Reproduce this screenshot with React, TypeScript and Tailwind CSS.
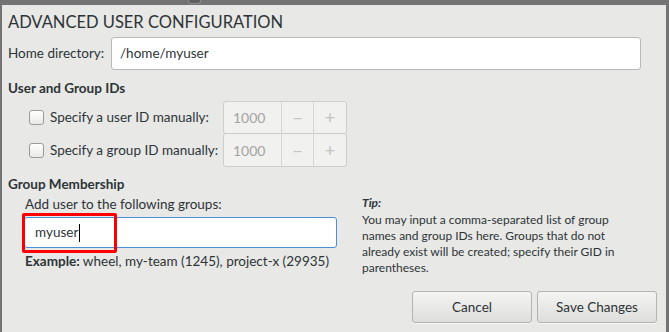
const font = 'Lato, "Open Sans", sans-serif';

function Checkbox() {
  return (
    <span className="block h-[15px] w-[15px] shrink-0 rounded-[3px] border border-[#9b9b99] bg-gradient-to-b from-[#ffffff] to-[#e9e9e7]" />
  );
}

function Spinner({ value, className = '' }: { value: string; className?: string }) {
  return (
    <div
      className={`flex w-[124px] rounded-[3px] border border-[#cdcdcb] bg-[#f1f1f0] text-[14px] text-[#a4a4a2] ${className}`}
    >
      <div className="flex w-[57px] items-center pl-[9px]">{value}</div>
      <div className="flex w-[32px] items-center justify-center border-l border-[#d6d6d4] text-[18px] text-[#c4c4c2]">
        −
      </div>
      <div className="flex flex-1 items-center justify-center border-l border-[#d6d6d4] text-[18px] text-[#c4c4c2]">
        +
      </div>
    </div>
  );
}

function IdRow({ label, className = '' }: { label: string; className?: string }) {
  return (
    <div className={`flex items-center pl-[21px] ${className}`}>
      <Checkbox />
      <span className="ml-[6px] w-[173px] whitespace-nowrap text-[#2e3436]">{label}</span>
      <Spinner value="1000" className="h-full" />
    </div>
  );
}

export default function App() {
  return (
    <div
      className="relative h-[332px] w-[669px] overflow-hidden bg-[#737373] pl-[2px] pr-[3px] pt-[5px] text-[13.5px]"
      style={{ fontFamily: font }}
    >
      <div className="absolute left-[188px] top-0 h-[4px] w-[13px] rounded-b-[3px] border border-t-0 border-[#8d8d8d] bg-[#5f5f5f]" />
      <div className="flex h-full flex-col bg-[#e8e8e7] pl-[6px] pr-[9px] pt-[6px] text-[#2e3436]">
        <h1 className="text-[16.5px] leading-[22px]">ADVANCED USER CONFIGURATION</h1>

        <div className="mr-[16px] mt-[4px] flex items-center">
          <span className="w-[103px] whitespace-nowrap">Home directory:</span>
          <div className="flex h-[33px] flex-1 items-center rounded-[3px] border border-[#b9b9b6] bg-white pl-[8px]">
            /home/myuser
          </div>
        </div>

        <div className="mt-[8px] font-bold leading-[20px]">User and Group IDs</div>
        <IdRow label="Specify a user ID manually:" className="mt-[3px] h-[33px]" />
        <IdRow label="Specify a group ID manually:" className="-mt-px h-[34px]" />

        <div className="mt-[7px] font-bold leading-[20px]">Group Membership</div>
        <div className="flex">
          <div className="ml-[16px] w-[313px]">
            <div className="pl-[1px] leading-[20px]">Add user to the following groups:</div>
            <div className="relative mt-[3px]">
              <div className="flex h-[31px] items-center rounded-[3px] border border-[#4a90d9] bg-white pl-[10px]">
                myuser
                <span className="ml-px h-[18px] w-px bg-black" />
              </div>
              <div className="absolute -left-[2px] -top-[4px] h-[40px] w-[95px] rounded-[2px] border-[3px] border-[#ff0000]" />
            </div>
            <div className="mt-[3px] whitespace-nowrap pl-[1px] leading-[20px]">
              <span className="font-bold">Example:</span> wheel, my-team (1245), project-x (29935)
            </div>
          </div>
          <div className="ml-[25px] mt-[1px] w-[262px] text-[12px] leading-[16px]">
            <div className="mb-px font-bold italic">Tip:</div>
            <p>
              You may input a comma-separated list of group names and group IDs here. Groups that do not
              already exist will be created; specify their GID in parentheses.
            </p>
          </div>
        </div>

        <div className="mt-auto flex justify-end gap-[5px] pb-[9px]">
          <button className="h-[32px] w-[120px] rounded-[3px] border border-[#b4b4b1] bg-gradient-to-b from-[#f4f4f3] to-[#dededc] text-[#2e3436] shadow-[0_1px_0_rgba(255,255,255,0.6)]">
            Cancel
          </button>
          <button className="h-[32px] w-[120px] rounded-[3px] border border-[#b4b4b1] bg-gradient-to-b from-[#f4f4f3] to-[#dededc] text-[#2e3436] shadow-[0_1px_0_rgba(255,255,255,0.6)]">
            Save Changes
          </button>
        </div>
      </div>
    </div>
  );
}
